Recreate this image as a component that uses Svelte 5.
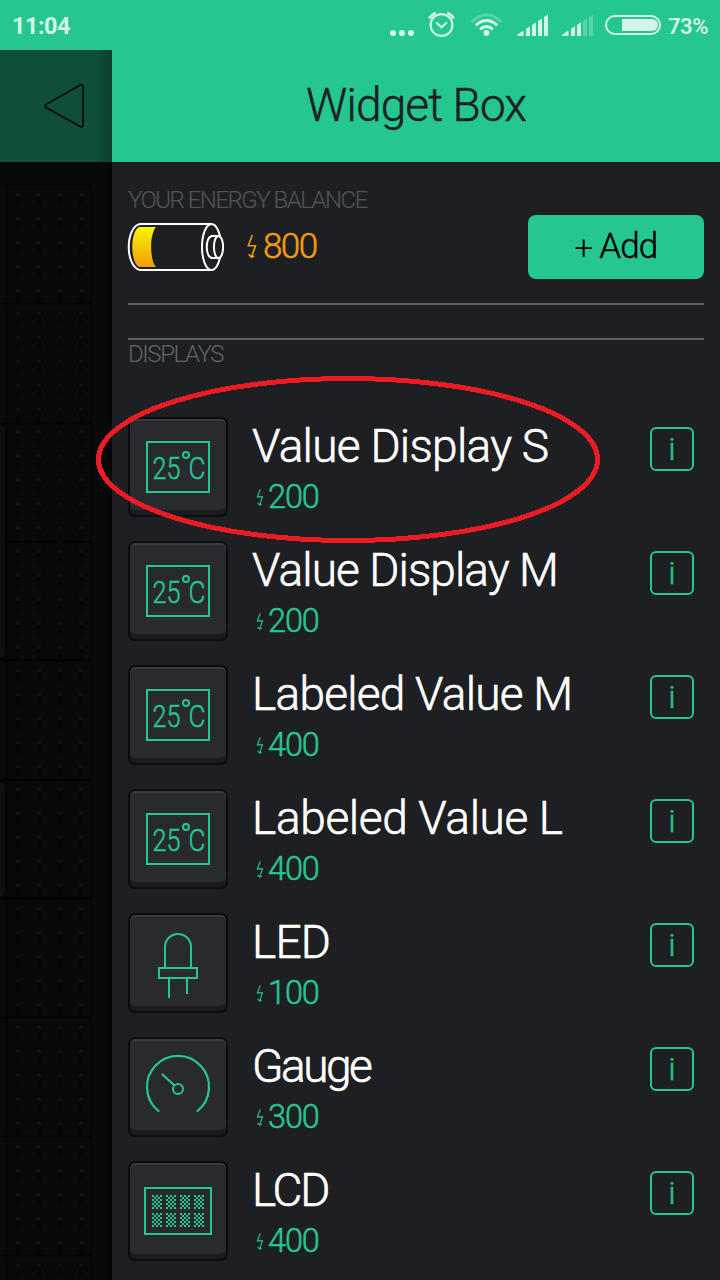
<script>
  const widgets = [
    { name: 'Value Display S', cost: 200, icon: 'value', track: '-0.7px' },
    { name: 'Value Display M', cost: 200, icon: 'value', track: '-0.9px' },
    { name: 'Labeled Value M', cost: 400, icon: 'value', track: '-0.75px' },
    { name: 'Labeled Value L', cost: 400, icon: 'value', track: '-0.35px' },
    { name: 'LED', cost: 100, icon: 'led', track: '-0.8px' },
    { name: 'Gauge', cost: 300, icon: 'gauge', track: '-2.5px' },
    { name: 'LCD', cost: 400, icon: 'lcd', track: '-2.2px' }
  ];
  const cellLines = [185, 303.5, 423, 541.5, 660.5, 779.5, 898.5, 1017.5, 1136.5, 1255.5];
  const dotX = [16, 37, 58, 79];
  const dotY = [8, 32, 56, 80, 104];
  const lcdCells = [0, 1, 2, 3, 4, 5, 6, 7];
</script>

{#snippet bolt()}
  <svg class="bolt" viewBox="0 0 10 24" fill="none" stroke="currentColor" stroke-width="1.6">
    <path d="M5.3 0.5 L1.3 11.2 H8.5 L4.9 21.5 M1.6 19.7 L4.5 22.8 L7.3 21.4" />
  </svg>
{/snippet}

<div class="screen">
  <header class="status">
    <span class="clock">11:04</span>
    <svg class="indicators" width="281" height="50" viewBox="380 0 281 50" fill="none">
      <g fill="#d3f4e7">
        <circle cx="393" cy="33" r="3.1" /><circle cx="402" cy="33" r="3.1" /><circle cx="411" cy="33" r="3.1" />
      </g>
      <g stroke="#d3f4e7" stroke-width="2.1">
        <circle cx="441.5" cy="25" r="10.9" />
        <path d="M436.3 22.5 L441.5 27.3 L446.8 22.5" />
        <path d="M429.1 18.5 Q431.5 14.5 435.7 12.7 M447.3 12.7 Q451.5 14.5 453.9 18.5" stroke-width="2.8" />
      </g>
      <path d="M471.8 22 Q486.5 7.5 501.2 22" stroke="#57d4a8" stroke-width="3" />
      <g stroke="#d3f4e7" stroke-width="3.1">
        <path d="M475.8 25.3 Q486.5 15.7 497.2 25.3" />
        <path d="M480.1 29.3 Q486.5 23.8 492.9 29.3" />
      </g>
      <circle cx="486.5" cy="33" r="2.9" fill="#d3f4e7" />
      <g fill="#d3f4e7">
        <path d="M517 36V34.8L523.5 30.5V36Z M526 36V28.8L530 26.3V36Z M532 36V25L536 22.2V36Z M538 36V21L542 18.5V36Z M544 36V17L548 14.5V36Z" />
        <path d="M562 36V34.8L568.5 30.5V36Z M571 36V28.8L575 26.3V36Z M577 36V25L581 22.2V36Z" />
      </g>
      <path fill="#57d4a8" d="M583 36V21L587 18.5V36Z M589 36V17L593 14.5V36Z" />
      <rect x="606" y="16" width="54" height="18" rx="9" stroke="#d3f4e7" stroke-width="2" />
      <path d="M622 19H652A6 6 0 0 1 652 31H622Z" fill="#d3f4e7" />
    </svg>
    <span class="percent">73%</span>
  </header>

  <div class="body">
    <aside>
      <button class="back" aria-label="Back">
        <svg width="42" height="46" viewBox="0 0 42 46" fill="none" stroke="#0b1110" stroke-width="2">
          <path d="M36.500 1.800 L2 21.500 Q0.200 23 2 24.500 L36.500 43.700 Q39 44.500 39 41.500 V4 Q39 1 36.500 1.800Z" />
        </svg>
      </button>
      <svg class="board" width="112" height="1118" viewBox="0 162 112 1118">
        <defs>
          <linearGradient id="edge"><stop offset="0" stop-color="#000" stop-opacity="0" /><stop offset="1" stop-color="#000" stop-opacity=".35" /></linearGradient>
        </defs>
        <path d="M7.5 185V1280 M91.5 185V1280" stroke="#050506" stroke-width="1.2" />
        {#each cellLines as y, i}
          <path d="M0 {y}H92" stroke={i === 0 ? '#050506' : '#030304'} stroke-width="1.500" />
          {#each dotY as dy}
            {#each dotX as x}
              <rect {x} y={Math.round(y + dy + 3)} width="4" height="10" fill="#060607" />
              <rect {x} y={Math.round(y + dy)} width="4" height="3" fill="#101112" />
            {/each}
          {/each}
        {/each}
        <rect x="-10" y="425" width="15.5" height="233" rx="4" fill="#0e0f10" stroke="#020202" />
        <rect x="-10" y="782" width="15.5" height="115" rx="4" fill="#0e0f10" stroke="#020202" />
        <rect x="100" y="162" width="12" height="1118" fill="url(#edge)" />
      </svg>
    </aside>

    <main>
      <h1><span>Widget Box</span></h1>
      <section class="balance">
        <h2 class="energy">YOUR ENERGY BALANCE</h2>
        <div class="funds">
          <svg class="battery" width="97" height="49" viewBox="127 222 97 49" fill="none" stroke="#fff" stroke-width="2">
            <defs>
              <linearGradient id="charge" x2="0" y2="1"><stop stop-color="#f8f600" /><stop offset="1" stop-color="#f09c08" /></linearGradient>
            </defs>
            <path stroke="none" fill="url(#charge)" d="M139 227H156C149.500 234 149.500 260 156 267H139C130 262 130 232 139 227Z" />
            <path d="M211.500 224H140C125 227 125 267 140 270H211.500" />
            <ellipse cx="211.500" cy="247" rx="9.500" ry="23" />
            <path d="M218.500 236H212C205 237 205 257 212 258H218.500" fill="#1e1f23" />
            <ellipse cx="218.500" cy="247" rx="4.600" ry="11" fill="#1e1f23" />
          </svg>
          <span class="credit">{@render bolt()}<b>800</b></span>
          <button class="add"><span class="plus">+</span><span>Add</span></button>
        </div>
      </section>
      <h2 class="group">DISPLAYS</h2>
      <ul>
        {#each widgets as w}
          <li>
            <div class="tile">
              <svg width="96" height="90" viewBox="0 0 96 90" fill="none" stroke="#25c791" stroke-width="2">
                {#if w.icon === 'value'}
                  <rect x="17" y="20" width="62" height="50" />
                  <text x="22.500" y="57" class="deg" textLength="28" lengthAdjust="spacingAndGlyphs">25</text>
                  <circle cx="56" cy="33" r="3" />
                  <text x="58.500" y="57" class="deg" textLength="17" lengthAdjust="spacingAndGlyphs">C</text>
                {:else if w.icon === 'led'}
                  <path d="M35 50V29A13 13 0 0 1 61 29V50 M39 61V80 M57 61V76" />
                  <rect x="29" y="50" width="38" height="10" />
                {:else if w.icon === 'gauge'}
                  <path d="M28.500 69A31 31 0 1 1 67.500 69 M32.500 32.500L44 43" stroke-width="2.200" stroke-linecap="round" />
                  <circle cx="48" cy="47" r="5" />
                {:else}
                  <defs>
                    <pattern id="checks" width="4" height="4" patternUnits="userSpaceOnUse">
                      <path d="M0 0H2V2H0Z M2 2H4V4H2Z" fill="#25c791" stroke="none" />
                    </pattern>
                  </defs>
                  <rect x="15" y="22" width="66" height="46" />
                  {#each lcdCells as i}
                    <g transform="translate({22 + (i % 4) * 14} {29 + Math.floor(i / 4) * 18})">
                      <rect width="10" height="14" fill="url(#checks)" stroke="none" />
                    </g>
                  {/each}
                {/if}
              </svg>
            </div>
            <div class="label">
              <span class="name" style:letter-spacing={w.track}>{w.name}</span>
              <span class="cost">{@render bolt()}<b>{w.cost}</b></span>
            </div>
            <button class="info" aria-label="About {w.name}">i</button>
          </li>
        {/each}
      </ul>
    </main>
  </div>

  <svg class="ring" width="504" height="168" viewBox="0 0 504 168" fill="none">
    <ellipse cx="252" cy="83.500" rx="249.500" ry="81" stroke="#ed1c24" stroke-width="5" shape-rendering="crispEdges" />
  </svg>
</div>

<style>
  :global(body) { background: #1e1f23; overflow: hidden; }
  * { box-sizing: border-box; }
  .screen { position: relative; width: 720px; height: 1280px; overflow: hidden; background: #1e1f23; font-family: Roboto, sans-serif; font-weight: 300; }
  svg { display: block; flex: none; }
  button { border: 0; padding: 0; font: inherit; }
  b { font-weight: 300; -webkit-text-stroke: 0.500px currentColor; }
  .status { display: flex; align-items: center; height: 50px; padding: 0 12px; background: #25c791; color: #d3f4e7; font-size: 23.500px; font-weight: 700; }
  .clock { flex: 1; padding-top: 2px; letter-spacing: -0.500px; }
  .percent { width: 47px; padding: 2px 0 0 7px; font-size: 22px; font-weight: 600; letter-spacing: -0.500px; white-space: nowrap; }
  .body { display: grid; grid-template-columns: 112px 608px; height: 1230px; }
  aside { background: #08090a; }
  .back { display: flex; align-items: center; width: 112px; height: 112px; padding-left: 44px; background: linear-gradient(90deg, #0f4f3a 98px, #0c3f2e 112px); }
  h1, h2, ul { margin: 0; padding: 0; font-weight: 300; }
  h1 { display: flex; align-items: center; justify-content: center; height: 112px; padding-bottom: 2px; background: #25c791; color: #1e1f23; font-size: 46px; white-space: nowrap; letter-spacing: -0.850px; -webkit-text-stroke: 0.500px currentColor; }
  h2 { color: #505255; font-size: 24px; line-height: 28px; white-space: nowrap; }
  .balance { height: 143px; margin: 0 16px; padding-top: 24px; border-bottom: 2px solid #5e6063; }
  .energy { letter-spacing: -1.500px; -webkit-text-stroke: 0.200px currentColor; }
  .funds { display: flex; align-items: center; height: 64px; margin-top: 1px; }
  .battery { margin: -2px 0 0 -1px; }
  .credit { display: flex; align-items: center; flex: 1; margin: -2px 0 0 23px; color: #f39c0c; font-size: 35px; letter-spacing: -1.600px; }
  .credit .bolt { width: 10px; height: 25px; margin-right: 6px; }
  .add { display: flex; align-items: center; justify-content: center; gap: 7px; width: 176px; height: 64px; padding-bottom: 2px; border-radius: 8px; background: #25c791; color: #000; font-size: 35px; letter-spacing: -0.900px; -webkit-text-stroke: 0.400px currentColor; }
  .plus { padding-top: 2px; font-size: 33px; -webkit-text-stroke: 0; }
  .group { height: 36px; margin: 33px 16px 0; border-top: 2px solid #5e6063; color: #626467; letter-spacing: -1.400px; }
  ul { list-style: none; margin: 43px 16px 0; }
  li { display: flex; height: 124px; }
  .tile { width: 100px; height: 100px; border: 2px solid #0b0c0e; border-radius: 7px; background: #292a2e; box-shadow: inset 0 2px #3a3b3e, inset 0 -5px #1a1b1d; }
  .tile svg { margin-top: 3px; }
  .deg { font-size: 31px; font-family: Roboto, sans-serif; font-weight: 300; fill: #25c791; stroke: #25c791; stroke-width: 0.500px; }
  .label { flex: 1; display: flex; flex-direction: column; padding-left: 24px; }
  .name { height: 60px; color: #fff; font-size: 46px; line-height: 58px; white-space: nowrap; -webkit-text-stroke: 0.600px currentColor; }
  .cost { display: flex; align-items: center; height: 40px; padding-left: 4px; color: #25c791; font-size: 32.500px; letter-spacing: -1.100px; }
  .cost .bolt { width: 8px; height: 17px; margin-right: 4px; }
  .info { width: 44px; height: 44px; margin: 10px 10px 0 0; padding-top: 2px; border: 2px solid #25c791; border-radius: 6px; background: none; color: #25c791; font-size: 31px; line-height: 38px; text-align: center; -webkit-text-stroke: 0.500px currentColor; }
  .ring { position: absolute; left: 96px; top: 376px; pointer-events: none; }
</style>
